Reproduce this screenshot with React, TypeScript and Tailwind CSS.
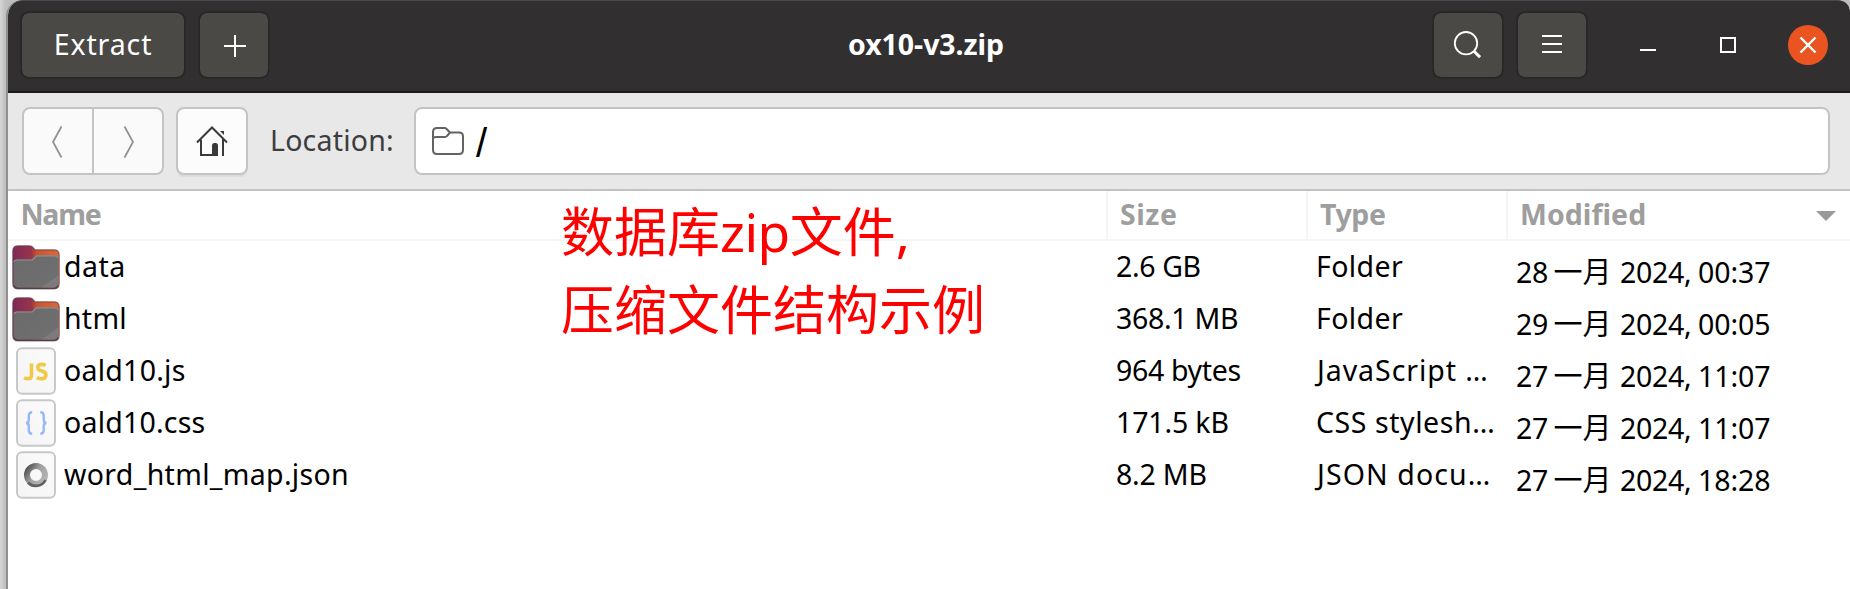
import type { ReactNode } from "react";

type Kind = "folder" | "js" | "css" | "json";

type Entry = {
  name: string;
  tracking: string;
  size: string;
  sizeTracking: string;
  type: string;
  typeTracking: string;
  modified: [string, string, string];
  kind: Kind;
};

const entries: Entry[] = [
  { name: "data", tracking: "tracking-[0.5px]", size: "2.6 GB", sizeTracking: "tracking-[-0.38px]", type: "Folder", typeTracking: "tracking-[0.4px]", modified: ["28", "2024,", "00:37"], kind: "folder" },
  { name: "html", tracking: "tracking-[0.25px]", size: "368.1 MB", sizeTracking: "tracking-[-0.3px]", type: "Folder", typeTracking: "tracking-[0.4px]", modified: ["29", "2024,", "00:05"], kind: "folder" },
  { name: "oald10.js", tracking: "tracking-[0.25px]", size: "964 bytes", sizeTracking: "tracking-[-0.33px]", type: "JavaScript …", typeTracking: "pl-px tracking-[0.95px]", modified: ["27", "2024,", "11:07"], kind: "js" },
  { name: "oald10.css", tracking: "tracking-[0.2px]", size: "171.5 kB", sizeTracking: "tracking-[-0.15px]", type: "CSS stylesh…", typeTracking: "tracking-[0.57px]", modified: ["27", "2024,", "11:07"], kind: "css" },
  { name: "word_html_map.json", tracking: "tracking-[0.32px]", size: "8.2 MB", sizeTracking: "tracking-[-0.2px]", type: "JSON docu…", typeTracking: "pl-px tracking-[1.1px]", modified: ["27", "2024,", "18:28"], kind: "json" },
];

function FolderIcon() {
  return (
    <svg viewBox="0 0 48 48" className="block size-12">
      <defs>
        <linearGradient id="back" x1="0" y1="0" x2="1" y2="0">
          <stop offset="0" stopColor="#7d2a56" />
          <stop offset="0.4" stopColor="#98344a" />
          <stop offset="0.52" stopColor="#c9552f" />
          <stop offset="1" stopColor="#e0663a" />
        </linearGradient>
        <linearGradient id="front" x1="0" y1="0" x2="1" y2="1">
          <stop offset="0" stopColor="#6a6a6a" />
          <stop offset="0.8" stopColor="#6f6f6f" />
          <stop offset="0.82" stopColor="#7c7c7c" />
          <stop offset="1" stopColor="#7a7a7a" />
        </linearGradient>
      </defs>
      <path d="M.8 8Q.8 2.800 6 2.800H17.500Q20 2.800 21.500 5L23 6.800H42Q47.200 6.800 47.200 12V40.500Q47.200 45.800 42 45.800H6Q.8 45.800 .8 40.500Z" fill="url(#back)" stroke="#5d3f4c" strokeOpacity=".65" strokeWidth="1.300" />
      <path d="M1.500 20Q1.500 16.500 5 16.500H20L24.200 12.300H43Q46.500 12.300 46.500 15.800V40.500Q46.500 44.800 42 44.800H6Q1.500 44.800 1.500 40.500Z" fill="url(#front)" />
      <path d="M2 19Q2.400 17 5 17H20.300L24.500 12.800H43Q45.400 12.800 46 15" fill="none" stroke="#8f8f8f" strokeWidth="1.200" />
      <path d="M2 42.500Q3 45.300 6 45.300H42Q45 45.300 46 42.500" fill="none" stroke="#504048" strokeWidth="1.200" />
    </svg>
  );
}

function DocIcon({ children }: { children: ReactNode }) {
  return (
    <svg viewBox="0 0 48 48" className="block size-12">
      <defs>
        <linearGradient id="sheet" x1="0" y1="1" x2="1" y2="0">
          <stop offset="0" stopColor="#f4f4f4" />
          <stop offset="1" stopColor="#fbfbfb" />
        </linearGradient>
      </defs>
      <rect x="5" y="1.200" width="38" height="45.600" rx="5" fill="url(#sheet)" stroke="#c8c8c8" strokeWidth="2" />
      {children}
    </svg>
  );
}

function FileIcon({ kind }: { kind: Kind }) {
  if (kind === "folder") return <FolderIcon />;
  if (kind === "js")
    return (
      <DocIcon>
        <path d="M19.500 16.500V28Q19.500 31.800 16 31.800Q13.800 31.800 12 30.800M33.800 18.300Q31.800 17.400 29.800 17.400Q25.800 17.400 25.800 20.400Q25.800 23 29.800 24Q34 25 34 28Q34 31.800 29.500 31.800Q26.800 31.800 24.800 30.600" fill="none" stroke="#f2c849" strokeWidth="3.600" />
      </DocIcon>
    );
  if (kind === "css")
    return (
      <DocIcon>
        <path d="M20.200 13.300Q16.800 13.300 16.800 16.800V20.800Q16.800 24 14 24Q16.800 24 16.800 27.200V31.200Q16.800 34.700 20.200 34.700M28.300 13.300Q31.700 13.300 31.700 16.800V20.800Q31.700 24 34.500 24Q31.700 24 31.700 27.200V31.200Q31.700 34.700 28.300 34.700" fill="none" stroke="#9ab6fa" strokeWidth="2.400" />
      </DocIcon>
    );
  return (
    <DocIcon>
      <defs>
        <linearGradient id="ring" x1="0" y1="0" x2="1" y2="0.700">
          <stop offset="0" stopColor="#4c4c4c" />
          <stop offset="0.5" stopColor="#a0a0a0" />
          <stop offset="1" stopColor="#b4b4b4" />
        </linearGradient>
      </defs>
      <circle cx="24" cy="24" r="9" fill="none" stroke="url(#ring)" strokeWidth="6" />
      <path d="M33.500 29A10.800 10.800 0 0 1 16 31.500" fill="none" stroke="#606060" strokeWidth="2.600" />
    </DocIcon>
  );
}

function HeaderButton({ className, children }: { className: string; children: ReactNode }) {
  return (
    <button className={`flex h-[66px] items-center justify-center rounded-[8px] border-[1px] border-[#282626] bg-[#4a4946] bg-clip-padding shadow-[0_0_0_1px_#2b2929] ${className}`}>
      {children}
    </button>
  );
}

function TitleBar() {
  return (
    <header className="flex h-[93px] items-start rounded-tl-[14px] rounded-tr-[10px] border-t border-b-2 border-t-[#4b4a4a] border-b-[#1c1b1b] bg-[#322f30] pl-[13px] pt-[11px] text-white">
      <HeaderButton className="w-[164px] leading-[62px]">
        <span className="h-16 tracking-[0.9px]">Extract</span>
      </HeaderButton>
      <HeaderButton className="ml-[14px] w-[70px]">
        <svg viewBox="0 0 22 22" className="ml-[2px] mt-[2px] size-[22px]" stroke="#fff" strokeWidth="2"><path d="M11 0V22M0 11H22" /></svg>
      </HeaderButton>
      <h1 className="ml-[579px] w-[585px] whitespace-nowrap font-bold leading-[64px] tracking-[-0.06px]">ox10-v3.zip</h1>
      <HeaderButton className="w-[70px]">
        <svg viewBox="0 0 28 28" className="mr-[2px] size-7" fill="none" stroke="#fff">
          <circle cx="13" cy="12.200" r="11.200" strokeWidth="1.800" />
          <path d="M20.500 19.700L27 26.200" strokeWidth="3" />
        </svg>
      </HeaderButton>
      <HeaderButton className="ml-[14px] w-[70px]">
        <svg viewBox="0 0 20 18" className="mt-[-2px] h-[18px] w-5" stroke="#fff" strokeWidth="2"><path d="M0 1H20M0 9H20M0 17H20" /></svg>
      </HeaderButton>
      <div className="flex h-[66px] items-center">
        <svg viewBox="0 0 16 16" className="ml-[53px] size-4" stroke="#fff" strokeWidth="2"><path d="M0 13H16" /></svg>
        <svg viewBox="0 0 16 16" className="ml-16 size-4" fill="none" stroke="#fff" strokeWidth="2"><path d="M1 1H15V15H1Z" /></svg>
        <svg viewBox="0 0 40 40" className="ml-[52px] size-10">
          <circle cx="20" cy="20" r="20" fill="#e95420" />
          <path d="M12.500 12.500L27.500 27.500M27.500 12.500L12.500 27.500" stroke="#fff" strokeWidth="2.400" />
        </svg>
      </div>
    </header>
  );
}

function Toolbar() {
  return (
    <div className="flex h-[98px] border-b-2 border-[#c2c2c2] bg-[#e8e8e8] pl-[14px] pt-[14px] text-[#3d3d3d]">
      <div className="flex h-[68px] w-[142px] rounded-[8px] border-2 border-[#c4c4c4] bg-[#fafafa] text-[#929292]">
        <button className="flex w-[70px] items-center justify-center border-r-2 border-[#c4c4c4]">
          <svg viewBox="0 0 10 32" className="ml-[-2px] mt-[1px] h-8 w-[10px]" fill="none" stroke="currentColor" strokeWidth="1.800"><path d="M9.500 .5L1 16L9.500 31.500" /></svg>
        </button>
        <button className="flex flex-1 items-center justify-center">
          <svg viewBox="0 0 10 32" className="ml-[1px] mt-[1px] h-8 w-[10px]" fill="none" stroke="currentColor" strokeWidth="1.800"><path d="M.5 .5L9 16L.5 31.500" /></svg>
        </button>
      </div>
      <button className="ml-3 flex h-[68px] w-[72px] items-center justify-center rounded-[8px] border-2 border-[#c4c4c4] bg-[#fcfcfc] shadow-[0_2px_1px_#dcdcdc]">
        <svg viewBox="0 0 32 32" className="size-8" fill="none" stroke="#3a3a3a" strokeWidth="2">
          <path d="M1 17.500L16 2.500L31 17.500" />
          <path d="M5 14.500V30H21.500M27 14V31" />
          <path d="M16 31V20.500Q16 18 18.500 18H19.500Q22 18 22 20.500V31Z" fill="#3a3a3a" stroke="none" />
          <path d="M24 6H28V10Z" fill="#3a3a3a" stroke="none" />
        </svg>
      </button>
      <span className="ml-[22px] mt-[-14px] w-[144px] leading-[94px] tracking-[0.2px]">Location:</span>
      <div className="flex h-[68px] w-[1416px] rounded-[8px] border-2 border-[#c4c4c4] bg-white pl-4 text-black">
        <svg viewBox="0 0 32 28" className="mt-[18px] h-7 w-8" fill="none" stroke="#636363" strokeWidth="2">
          <path d="M1 23V5Q1 1 5 1H12.500Q13.800 1 14.600 2L18 5.500H27Q31 5.500 31 9.500V23Q31 27 27 27H5Q1 27 1 23Z" />
          <path d="M1 11.500Q1.500 10 4 10H13Q14.200 10 15 9L18 5.500" />
        </svg>
        <span className="ml-3 font-['Liberation_Sans',sans-serif] text-[40px] leading-[68px]">/</span>
      </div>
    </div>
  );
}

export default function App() {
  return (
    <div className="relative flex h-[589px] w-[1850px] overflow-hidden bg-[linear-gradient(to_right,#d6d6d6,#bdbdbd_6px,#bdbdbd)] font-['Noto_Sans','Noto_Sans_CJK_SC',sans-serif] text-[28.5px] text-black">
      <div className="ml-[6px] flex-1 overflow-hidden rounded-tl-[16px] rounded-tr-[12px] border-l-2 border-[#909090] bg-white">
        <TitleBar />
        <Toolbar />
        <div className="grid h-[50px] grid-cols-[1100px_200px_200px_342px] border-b-2 border-[#f5f5f5] font-bold leading-[46px] text-[#9e9e9e]">
          <div className="border-r-2 border-[#f5f5f5] pl-[12.500px] tracking-[-1.3px]">Name</div>
          <div className="border-r-2 border-[#f5f5f5] pl-3 tracking-[0.57px]">Size</div>
          <div className="border-r-2 border-[#f5f5f5] pl-3 tracking-[-0.39px]">Type</div>
          <div className="flex pl-3 tracking-[0.05px]">
            <span className="w-[296px]">Modified</span>
            <svg viewBox="0 0 20 10" className="mt-5 h-[10px] w-5" fill="#9a9a9a"><path d="M0 0H20L10 10Z" /></svg>
          </div>
        </div>
        {entries.map((e) => (
          <div key={e.name} className="grid h-[52px] grid-cols-[1108px_200px_200px_334px] whitespace-nowrap leading-[50px]">
            <div className="flex pl-1">
              <div className="mt-[2px]"><FileIcon kind={e.kind} /></div>
              <span className={`ml-1 ${e.tracking}`}>{e.name}</span>
            </div>
            <span className={e.sizeTracking}>{e.size}</span>
            <span className={e.typeTracking}>{e.type}</span>
            <div className="flex pt-[6px]">
              <span className="w-[37.5px] tracking-[-0.3px]">{e.modified[0]}</span>
              <span className="w-[66.5px] text-[29px]">一月</span>
              <span className="w-[78px] tracking-[-0.3px]">{e.modified[1]}</span>
              <span className="tracking-[-0.1px]">{e.modified[2]}</span>
            </div>
          </div>
        ))}
      </div>
      <p className="absolute left-[561px] top-[193px] whitespace-nowrap text-[53px] leading-[78px] text-[#ff0000]">
        数据库<span className="tracking-[-0.5px]">zip</span>文件,
        <br />
        压缩文件结构示例
      </p>
    </div>
  );
}
